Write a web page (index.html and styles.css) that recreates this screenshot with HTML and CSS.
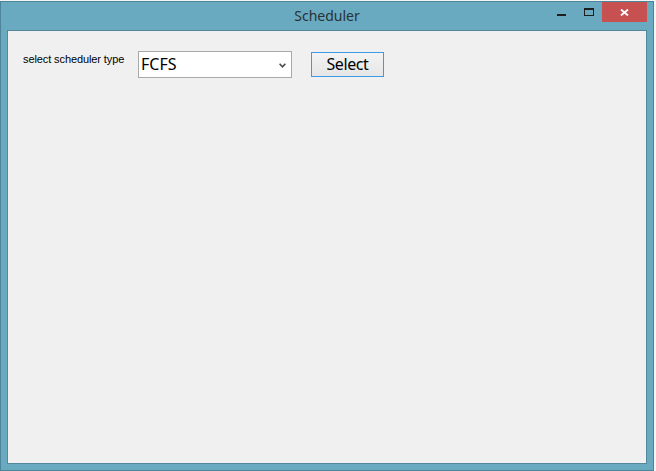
FILE: index.html
```html
<!DOCTYPE html>
<html>
<head>
<meta charset="utf-8">
<title>Scheduler</title>
<link rel="stylesheet" href="styles.css">
</head>
<body>
<div class="window">
  <div class="titlebar">
    <div class="title">Scheduler</div>
    <div class="controls">
      <span class="ctl-min"></span>
      <span class="ctl-max"></span>
      <span class="ctl-close">
        <svg width="9" height="7" viewBox="0 0 9 7"><path d="M1 0.5 L8 6.5 M8 0.5 L1 6.5" stroke="#fff" stroke-width="1.8" fill="none"/></svg>
      </span>
    </div>
  </div>
  <div class="client">
    <div class="form-row">
      <label class="field-label">select scheduler type</label>
      <div class="combo">
        <span class="combo-value">FCFS</span>
        <svg class="combo-arrow" width="7" height="5" viewBox="0 0 7 5"><path d="M0.6 0.8 L3.5 3.8 L6.4 0.8" stroke="#4a4a4a" stroke-width="1.6" fill="none"/></svg>
      </div>
      <button class="btn">Select</button>
    </div>
  </div>
</div>
</body>
</html>
```
FILE: styles.css
```css
html, body {
  margin: 0;
  padding: 0;
}
body {
  background: #f4f4f4;
  width: 656px;
  height: 471px;
  overflow: hidden;
}
.window {
  margin-top: 1px;
  width: 654px;
  height: 470px;
  box-sizing: border-box;
  border: 1px solid #4c8599;
  background: #6aaac0;
  display: flex;
  flex-direction: column;
}
.titlebar {
  height: 28px;
  flex: none;
  display: grid;
  grid-template-columns: 1fr auto 1fr;
}
.title {
  grid-column: 2;
  font-family: "Noto Sans", sans-serif;
  font-size: 14px;
  line-height: 28px;
  color: #263238;
}
.controls {
  grid-column: 3;
  justify-self: end;
  display: flex;
  align-items: flex-start;
}
.ctl-min {
  width: 9px;
  height: 2px;
  margin-top: 12px;
  margin-right: 18px;
  background: #1e1e1e;
}
.ctl-max {
  width: 10px;
  height: 8px;
  box-sizing: border-box;
  margin-top: 6px;
  margin-right: 8px;
  border: 1px solid #1e1e1e;
  border-top-width: 2px;
}
.ctl-close {
  width: 45px;
  height: 20px;
  margin-right: 6px;
  background: #c75050;
  display: flex;
  align-items: center;
  justify-content: center;
}
.ctl-close svg {
  display: block;
  margin-top: 1px;
}
.client {
  flex: 1;
  margin: 0 6px 6px 6px;
  border: 1px solid #55889b;
  background: #f0f0f0;
}
.form-row {
  display: flex;
  align-items: flex-start;
  padding: 20px 0 0 15px;
}
.field-label {
  width: 115px;
  margin-top: 2px;
  font-family: "Liberation Sans", Arial, sans-serif;
  font-size: 11px;
  letter-spacing: -0.1px;
  line-height: 13px;
  color: #000;
}
.combo {
  width: 154px;
  height: 27px;
  box-sizing: border-box;
  border: 1px solid #a9a9a9;
  background: #fff;
  display: flex;
  align-items: center;
  padding: 0 5px 0 2px;
}
.combo-value {
  flex: 1;
  font-family: "Noto Sans", sans-serif;
  font-size: 16px;
  line-height: 25px;
  color: #000;
}
.combo-arrow {
  display: block;
  margin-top: 1px;
}
.btn {
  margin: 1px 0 0 19px;
  width: 73px;
  height: 25px;
  box-sizing: border-box;
  padding: 0;
  border: 1px solid #3c9ae8;
  background: linear-gradient(#f3f3f3, #e6e6e6);
  font-family: "Noto Sans", sans-serif;
  font-size: 16px;
  letter-spacing: -0.4px;
  line-height: 23px;
  color: #000;
}
```
